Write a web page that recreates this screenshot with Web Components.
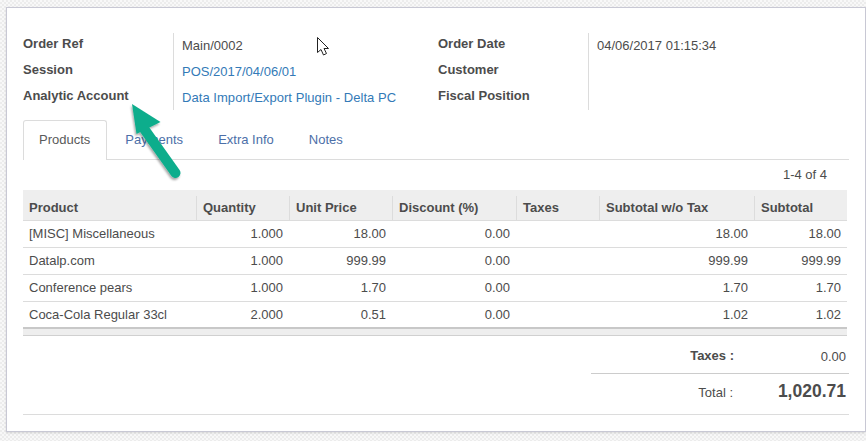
<!DOCTYPE html>
<html>
<head>
<meta charset="utf-8">
<title>Order</title>
<style>
  html, body { margin: 0; padding: 0; height: 441px; overflow: hidden; }
  body {
    font: 13px "Liberation Sans", Arial, sans-serif;
    color: #4c4c4c;
    background-color: #f4f4f4;
    background-image: repeating-conic-gradient(#ececec 0 25%, #f8f8f8 0 50%);
    background-size: 4px 4px;
  }
</style>
</head>
<body>

<order-sheet>
  <field-group slot="fields">
    <field-row label="Order Ref">Main/0002</field-row>
    <field-row label="Session" link>POS/2017/04/06/01</field-row>
    <field-row label="Analytic Account" link style="letter-spacing:.05px">Data Import/Export Plugin - Delta PC</field-row>
  </field-group>
  <field-group slot="fields">
    <field-row label="Order Date">04/06/2017 01:15:34</field-row>
    <field-row label="Customer"></field-row>
    <field-row label="Fiscal Position"></field-row>
  </field-group>
  <tab-bar slot="tabs" active="Products" items="Products,Payments,Extra Info,Notes"></tab-bar>
  <order-lines slot="lines"></order-lines>
  <order-totals slot="totals"></order-totals>
</order-sheet>

<script>
class OrderSheet extends HTMLElement {
  constructor() {
    super();
    const shadowRoot = this.attachShadow({mode: 'open'});
    shadowRoot.innerHTML = `
      <style>
        :host {
          display: block;
          box-sizing: border-box;
          position: absolute;
          left: 6px;
          top: 7px;
          width: 860px;
          height: 425px;
          background: #fff;
          border: 1px solid #c8c8d4;
          padding: 25px 16px 0 16px;
          box-shadow: 0 1px 2px rgba(0,0,0,.12);
        }
        .fields { display: flex; height: 78px; }
        .arrow { position: absolute; left: 111px; top: 89px; }
        .cursor { position: absolute; left: 309px; top: 28px; }
      </style>
      <div class="fields"><slot name="fields"></slot></div>
      <slot name="tabs"></slot>
      <slot name="lines"></slot>
      <slot name="totals"></slot>
      <svg class="arrow" width="75" height="95" viewBox="118 97 75 95">
        <defs>
          <filter id="sh" x="-20%" y="-20%" width="150%" height="150%">
            <feDropShadow dx="-1" dy="2" stdDeviation="1.2" flood-color="#000" flood-opacity=".35"/>
          </filter>
        </defs>
        <g filter="url(#sh)" fill="#0fad8c" stroke="#0fad8c">
          <path d="M132 104 L160.500 122 L136.500 134 Z" stroke="none"/>
          <path d="M143.500 128 L175.500 173" stroke-width="10" stroke-linecap="round" fill="none"/>
        </g>
      </svg>
      <svg class="cursor" width="14" height="21" viewBox="0 0 14 21">
        <path d="M1.500 1.500 V16.500 L5 13.500 L7.500 19 L10.500 17.500 L8 12.500 H12.500 Z" fill="#fff" stroke="#222" stroke-width="1"/>
      </svg>
    `;
  }
}

class FieldGroup extends HTMLElement {
  constructor() {
    super();
    const shadowRoot = this.attachShadow({mode: 'open'});
    shadowRoot.innerHTML = `
      <style>
        :host { display: flex; flex: none; flex-direction: column; position: relative; width: 415px; }
        .rule { position: absolute; top: 0; height: 77px; left: 150px; width: 1px; background: #dcdcdc; }
      </style>
      <div class="rule"></div>
      <slot></slot>
    `;
  }
}

class FieldRow extends HTMLElement {
  constructor() {
    super();
    const shadowRoot = this.attachShadow({mode: 'open'});
    const link = this.hasAttribute('link');
    shadowRoot.innerHTML = `
      <style>
        :host { display: flex; height: 26px; }
        .label { width: 159px; flex: none; font-weight: bold; line-height: 22px; letter-spacing: 0; color: #4c4c4c; }
        .value { line-height: 26px; color: ${ link ? '#337ab7' : '#4c4c4c' }; }
      </style>
      <div class="label">${ this.getAttribute('label') }</div>
      <div class="value"><slot></slot></div>
    `;
  }
}

class TabBar extends HTMLElement {
  constructor() {
    super();
    const shadowRoot = this.attachShadow({mode: 'open'});
    const active = this.getAttribute('active');
    const tabs = this.getAttribute('items').split(',').map((name) => {
      return `<a class="${ name === active ? 'tab on' : 'tab' }">${ name }</a>`;
    }).join('');
    shadowRoot.innerHTML = `
      <style>
        :host {
          display: flex;
          box-sizing: border-box;
          height: 40px;
          margin-top: 9px;
          border-bottom: 1px solid #dcdcdc;
        }
        .tab {
          box-sizing: border-box;
          height: 40px;
          margin-right: 1px;
          padding: 11px 16px 0;
          color: #4c6fa8;
          border: 1px solid transparent;
          border-bottom: 0;
        }
        .on {
          padding-left: 15px;
          background: #fff;
          color: #5a5a5a;
          border-color: #dcdcdc;
          border-radius: 3px 3px 0 0;
        }
      </style>
      ${ tabs }
    `;
  }
}

class OrderLines extends HTMLElement {
  constructor() {
    super();
    const shadowRoot = this.attachShadow({mode: 'open'});
    const rows = [
      ['[MISC] Miscellaneous', '1.000', '18.00', '0.00', '', '18.00', '18.00'],
      ['Datalp.com', '1.000', '999.99', '0.00', '', '999.99', '999.99'],
      ['Conference pears', '1.000', '1.70', '0.00', '', '1.70', '1.70'],
      ['Coca-Cola Regular 33cl', '2.000', '0.51', '0.00', '', '1.02', '1.02']
    ];
    const heads = ['Product', 'Quantity', 'Unit Price', 'Discount (%)', 'Taxes', 'Subtotal w/o Tax', 'Subtotal'];
    const cols = '173px 93px 103px 124px 83px 155px 93px';
    shadowRoot.innerHTML = `
      <style>
        :host { display: block; width: 824px; }
        .pager { height: 30px; line-height: 30px; text-align: right; padding-right: 20px; }
        .head, .row { display: grid; grid-template-columns: ${ cols }; }
        .head {
          height: 30px;
          background: #eee;
          font-weight: bold;
          align-items: end;
          border-bottom: 1px solid #dcdcdc;
        }
        .head div {
          height: 24px;
          line-height: 23px;
          padding-left: 6px;
          border-left: 1px solid #dcdcdc;
        }
        .head div:first-child { border-left: 0; }
        .row { height: 26px; line-height: 26px; border-bottom: 1px solid #dcdcdc; }
        .row:nth-last-child(2) { height: 25px; border-bottom: 0; }
        .row div { padding: 0 6px; text-align: right; }
        .row div:first-child { text-align: left; }
        .foot { height: 6px; background: #eee; border-top: 2px solid #c8c8c8; border-bottom: 1px solid #d0d0d0; }
      </style>
      <div class="pager">1-4 of 4</div>
      <div class="head">${ heads.map((h) => `<div>${ h }</div>`).join('') }</div>
      ${ rows.map((r) => `<div class="row">${ r.map((c) => `<div>${ c }</div>`).join('') }</div>`).join('') }
      <div class="foot"></div>
    `;
  }
}

class OrderTotals extends HTMLElement {
  constructor() {
    super();
    const shadowRoot = this.attachShadow({mode: 'open'});
    shadowRoot.innerHTML = `
      <style>
        :host { display: block; width: 826px; height: 78px; border-bottom: 1px solid #dcdcdc; }
        .box { width: 258px; margin-left: auto; }
        .line { display: grid; grid-template-columns: 143px 112px; }
        .line div:last-child { text-align: right; }
        .taxes { height: 37px; border-bottom: 1px solid #ccc; line-height: 42px; }
        .taxes div:first-child { font-weight: bold; text-align: right; line-height: 40px; }
        .total { line-height: 38px; }
        .total div:first-child { text-align: right; padding-right: 1px; }
        .total div:last-child { font-size: 17.500px; font-weight: bold; line-height: 35px; }
      </style>
      <div class="box">
        <div class="line taxes"><div>Taxes :</div><div>0.00</div></div>
        <div class="line total"><div>Total :</div><div>1,020.71</div></div>
      </div>
    `;
  }
}

customElements.define('order-sheet', OrderSheet);
customElements.define('field-group', FieldGroup);
customElements.define('field-row', FieldRow);
customElements.define('tab-bar', TabBar);
customElements.define('order-lines', OrderLines);
customElements.define('order-totals', OrderTotals);
</script>
</body>
</html>
